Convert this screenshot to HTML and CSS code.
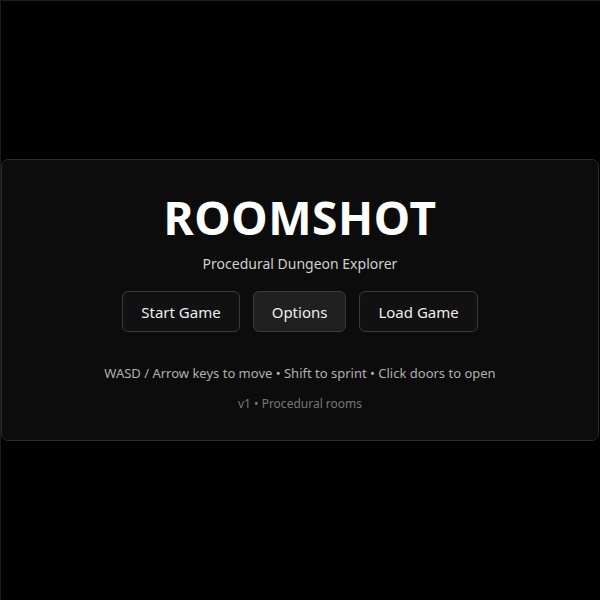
FILE: index.html
```html
<!DOCTYPE html>
<html lang="en">
	<head>
		<title>Roomshot</title>
		<meta charset="UTF-8">
		<link rel="stylesheet" href="styles.css">
	</head>
	<body>
		<div class="menuPanel">
			<h1 class="gameTitle">ROOMSHOT</h1>
			<p class="subTitle">Procedural Dungeon Explorer</p>
			<div class="menuButtons">
				<button class="menuButton">Start Game</button>
				<button class="menuButton active">Options</button>
				<button class="menuButton">Load Game</button>
			</div>
			<p class="controlsHint">WASD / Arrow keys to move &bull; Shift to sprint &bull; Click doors to open</p>
			<p class="versionInfo">v1 &bull; Procedural rooms</p>
		</div>
	</body>
</html>
```

FILE: styles.css
```css
html, body {
	margin : 0;
	padding : 0;
	height : 100%;
}
body {
	font-family : "Noto Sans", "Open Sans", sans-serif;
	background-color : #000;
	color : #eee;
	border-top : 1px solid #1c1c1c;
	border-left : 1px solid #1c1c1c;
	box-sizing : border-box;
	display : flex;
	align-items : center;
	padding-right : 1px;
}
p, h1 {
	margin : 0;
	padding : 0;
}

.menuPanel {
	flex : 1;
	background-color : #0c0c0c;
	border : 1px solid #2a2a2a;
	border-radius : 7px;
	padding : 30px 0 28px 0;
	display : flex;
	flex-direction : column;
	align-items : center;
	margin-top : -1px;
}
.gameTitle {
	font-size : 46px;
	font-weight : 700;
	line-height : 1.2;
	letter-spacing : 0.6px;
	color : #fff;
}
.subTitle {
	font-size : 14px;
	color : #cfcfcf;
	margin-top : 9px;
}
.menuButtons {
	display : flex;
	gap : 13px;
	margin-top : 18px;
}
.menuButton {
	font-family : inherit;
	font-size : 15px;
	color : #eee;
	background-color : #111;
	border : 1px solid #3a3a3a;
	border-radius : 6px;
	height : 41px;
	padding : 0 18px;
	cursor : pointer;
}
.menuButton.active {
	background-color : #202020;
}
.controlsHint {
	font-size : 13px;
	color : #b0b0b0;
	margin-top : 32px;
}
.versionInfo {
	font-size : 12px;
	color : #777;
	margin-top : 13px;
}
```
